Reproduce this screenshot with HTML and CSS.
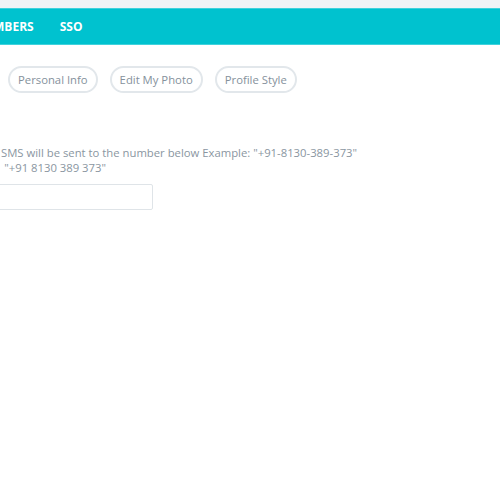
FILE: index.html
```html
<!DOCTYPE html>
<html>
<head>
<meta charset="utf-8">
<link rel="stylesheet" href="styles.css">
</head>
<body>
<div class="topstrip"></div>
<nav class="navbar">
  <span class="nav-item">MEMBERS</span>
  <span class="nav-item">SSO</span>
</nav>
<main class="content">
  <div class="tabs">
    <button class="pill">Personal Info</button>
    <button class="pill">Edit My Photo</button>
    <button class="pill">Profile Style</button>
  </div>
  <div class="form">
    <p class="hint">An SMS will be sent to the number below Example: "+91-8130-389-373"<br>or&nbsp;&nbsp;&nbsp;"+91 8130 389 373"</p>
    <input class="phone" type="text">
  </div>
</main>
</body>
</html>
```
FILE: styles.css
```css
html, body {
  margin: 0;
  padding: 0;
  background: #fff;
  font-family: "Open Sans", "Liberation Sans", sans-serif;
  overflow: hidden;
}
.topstrip {
  height: 8px;
  background: #f1f4f6;
}
.navbar {
  height: 35px;
  background: #00c2cf;
  border-top: 1px solid #40d2dc;
  border-bottom: 1px solid #40d2dc;
  display: flex;
  align-items: center;
  gap: 26px;
  margin-left: -25px;
}
.nav-item {
  color: #fff;
  font-weight: 700;
  font-size: 12px;
}
.content {
  padding-top: 21px;
}
.tabs {
  display: flex;
  gap: 12px;
  padding-left: 8px;
}
.pill {
  height: 27px;
  padding: 0 8px;
  border: 2px solid #e2e7eb;
  border-radius: 14px;
  background: #fff;
  color: #85919c;
  font-family: "Open Sans", "Liberation Sans", sans-serif;
  font-size: 11.3px;
}
.form {
  margin-left: -16px;
  margin-top: 52px;
}
.hint {
  margin: 0;
  color: #8a96a1;
  font-size: 11.3px;
  line-height: 15px;
}
.phone {
  display: block;
  margin-top: 9px;
  width: 169px;
  height: 26px;
  box-sizing: border-box;
  border: 1px solid #dfe4e8;
  border-radius: 2px;
}
```
